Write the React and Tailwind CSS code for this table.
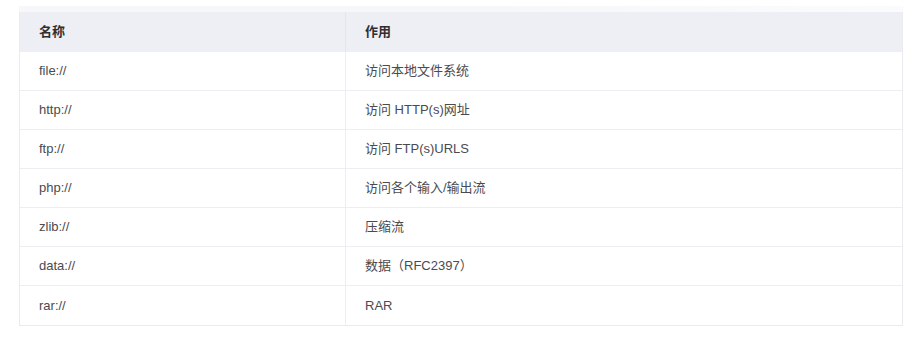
export default function App() {
  const rows = [
    ["file://", "访问本地文件系统"],
    ["http://", "访问 HTTP(s)网址"],
    ["ftp://", "访问 FTP(s)URLS"],
    ["php://", "访问各个输入/输出流"],
    ["zlib://", "压缩流"],
    ["data://", "数据（RFC2397）"],
    ["rar://", "RAR"],
  ];
  return (
    <div
      className="w-[918px] h-[351px] bg-white pt-[6px] pl-[19px]"
      style={{ fontFamily: '"Liberation Sans", Arial, "Noto Sans CJK SC", sans-serif' }}
    >
      <div className="w-[884px] h-[6px] bg-gradient-to-r from-[#f7f7f9] via-[#f7f7f9] to-[#fbfbfc]" />
      <div className="w-[884px] border-x border-b border-[#e9ebf0] text-[13px]">
        <div className="flex h-[40px] bg-[#eeeff4] font-bold text-[#2f2f33]">
          <div className="w-[326px] flex items-center pl-[19px] border-r border-[#e4e6ec]">名称</div>
          <div className="flex-1 flex items-center pl-[19px]">作用</div>
        </div>
        {rows.map(([a, b], i) => (
          <div
            key={i}
            className={`flex h-[39px] text-[#4a4a4f] ${i < rows.length - 1 ? "border-b border-[#eceef2]" : ""}`}
          >
            <div className="w-[326px] flex items-center pl-[19px] border-r border-[#eceef2]">{a}</div>
            <div className="flex-1 flex items-center pl-[19px]">{b}</div>
          </div>
        ))}
      </div>
    </div>
  );
}
